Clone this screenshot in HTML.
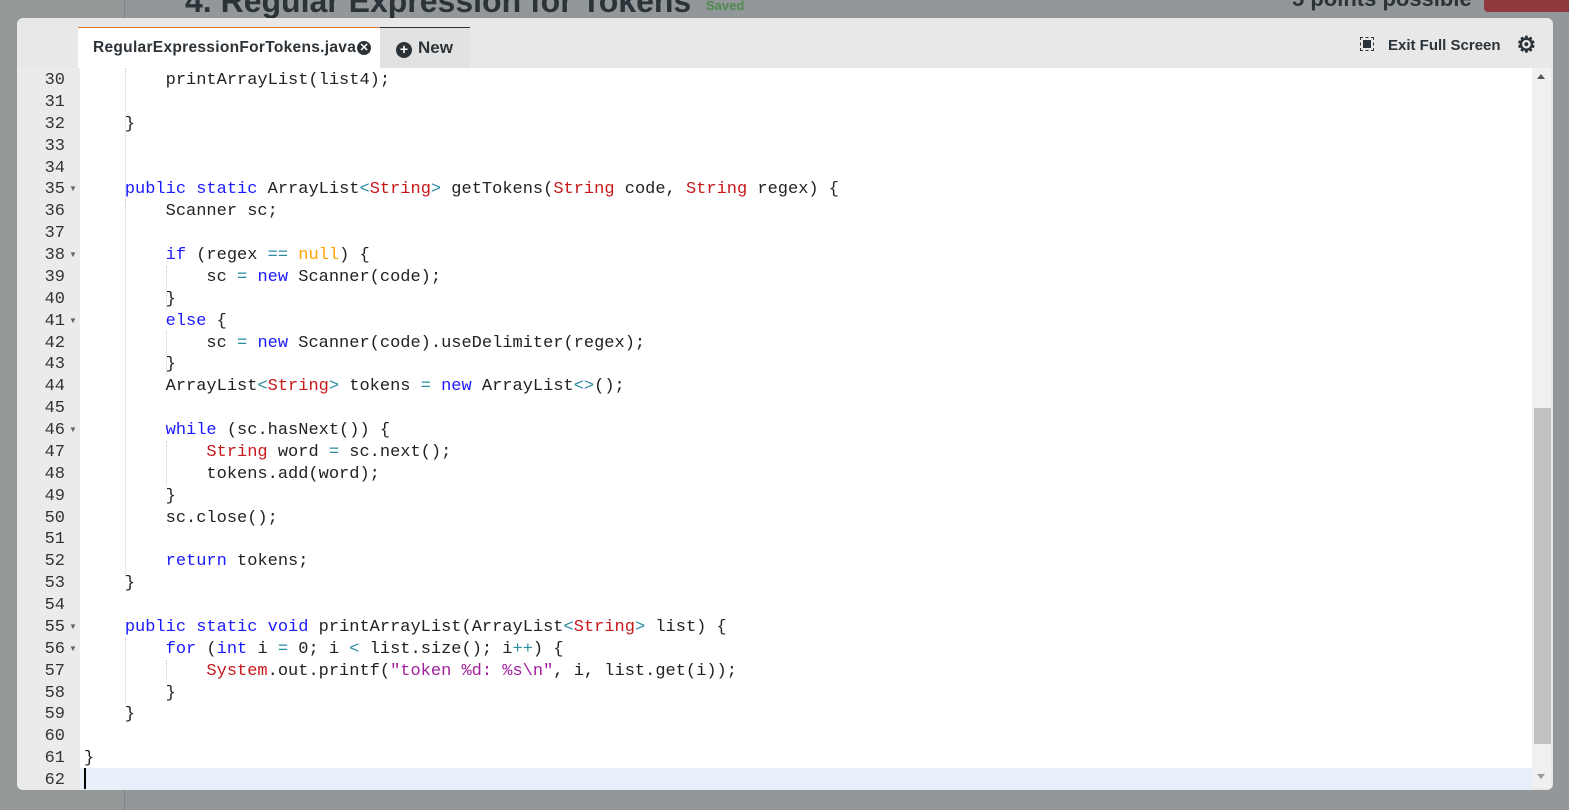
<!DOCTYPE html>
<html><head><meta charset="utf-8"><style>
*{margin:0;padding:0;box-sizing:border-box}
body{width:1569px;height:810px;overflow:hidden;background:#929799;font-family:"Liberation Sans",sans-serif;position:relative}
.side{position:absolute;left:0;top:0;width:125px;height:810px;background:#939899;border-right:1px solid #7f8485}
.title{position:absolute;left:185px;top:-17px;font-size:32px;font-weight:bold;color:#2c3338}
.saved{position:absolute;left:706px;top:-2px;font-size:13px;color:#4f8a4f;font-weight:bold}
.pts{position:absolute;left:1292px;top:-14px;font-size:22px;font-weight:bold;color:#2c3338}
.redbtn{position:absolute;left:1484px;top:-10px;width:90px;height:22px;background:#8e3a3d;border-radius:4px}
.panel{position:absolute;left:17px;top:18px;width:1536px;height:772px;background:#e8e8e8;border-radius:6px;overflow:hidden}
.tab{position:absolute;left:61px;top:9px;width:302px;height:41px;background:#fff;border-top:1px solid #e0772a;font-size:15.5px;font-weight:bold;color:#2c3338;padding:11px 0 0 15px;letter-spacing:0.3px}
.x{display:inline-block;width:14px;height:14px;border-radius:50%;background:#2c3338;color:#fff;font-size:11px;line-height:14px;text-align:center;vertical-align:1px;margin-left:1px;letter-spacing:0}
.new{position:absolute;left:363px;top:9px;width:90px;height:41px;background:#e2e2e2;border-top:1px solid #2c3338;font-size:17px;font-weight:bold;color:#2c3338;padding:10px 0 0 16px}
.plus{display:inline-block;width:16px;height:16px;border-radius:50%;background:#2c3338;color:#fff;font-size:14px;line-height:15px;text-align:center;font-weight:bold;vertical-align:-1px;margin-right:6px}
.exit{position:absolute;left:1343px;top:14px;font-size:15px;font-weight:bold;color:#2c3338}
.gut{position:absolute;left:0;top:50px;width:63px;height:722px;background:#ebebeb}
.code{position:absolute;left:63px;top:50px;width:1452px;height:722px;background:#fff}
.sb{position:absolute;left:1515px;top:50px;width:19px;height:720px;background:#f0f0f0}
.thumb{position:absolute;left:2px;top:340px;width:17px;height:336px;background:#c1c1c1}
.ln{position:absolute;left:0;width:48px;text-align:right;font-family:"Liberation Mono",monospace;font-size:17px;color:#333;height:21.875px;line-height:21.875px;padding-top:2px}
.fold{position:absolute;left:52px;font-size:8px;color:#666}
.l{position:absolute;left:4px;font-family:"Liberation Mono",monospace;font-size:17px;white-space:pre;color:#222;height:21.875px;line-height:21.875px;padding-top:2px}
.k{color:#1a1aff}.t{color:#c8171a}.o{color:#2a8ca0}.n{color:#ffa500}.s{color:#a0209c}
.g{position:absolute;border-left:1px dotted #ccc}
.cur{position:absolute;left:0;top:700px;width:1452px;height:22px;background:#e6effa}
</style></head><body>
<div class="side"></div>
<div class="title">4. Regular Expression for Tokens</div>
<div class="saved">Saved</div>
<div class="pts">5 points possible</div>
<div class="redbtn"></div>
<div class="panel">
<div class="tab">RegularExpressionForTokens.java<span class="x">✕</span></div>
<div class="new"><span class="plus">+</span>New</div>
<div class="exit"><span style="display:inline-block;width:14px;height:14px;border:1px dashed #2c3338;padding:2px;vertical-align:-1px;margin-right:14px"><span style="display:block;width:8px;height:8px;background:#2c3338"></span></span>Exit Full Screen<span style="margin-left:16px;font-size:22px;vertical-align:-2px">⚙</span></div>
<div class="gut" id="g"></div>
<div class="code" id="c"><div class="cur"></div>
<div class="g" style="left:45px;top:0;height:220px"></div>
<div class="g" style="left:86px;top:198px;height:44px"></div>
<div class="g" style="left:86px;top:263px;height:44px"></div>
<div class="g" style="left:86px;top:373px;height:44px"></div>
<div class="g" style="left:45px;top:132px;height:376px"></div>
<div class="g" style="left:45px;top:570px;height:66px"></div>
<div class="g" style="left:86px;top:592px;height:22px"></div>
<div style="position:absolute;left:4px;top:700px;width:2px;height:21px;background:#000"></div>
</div>
<div class="sb"><div style="position:absolute;left:5px;top:6px;border:4px solid transparent;border-bottom:5px solid #555;border-top:0"></div><div class="thumb"></div><div style="position:absolute;left:5px;top:706px;border:4px solid transparent;border-top:5px solid #999;border-bottom:0"></div></div>
</div>
<script>
var L=[
'        printArrayList(list4);','','    }','','',
'    <k>public</k> <k>static</k> ArrayList<o>&lt;</o><t>String</t><o>&gt;</o> getTokens(<t>String</t> code, <t>String</t> regex) {',
'        Scanner sc;','',
'        <k>if</k> (regex <o>==</o> <n>null</n>) {',
'            sc <o>=</o> <k>new</k> Scanner(code);',
'        }',
'        <k>else</k> {',
'            sc <o>=</o> <k>new</k> Scanner(code).useDelimiter(regex);',
'        }',
'        ArrayList<o>&lt;</o><t>String</t><o>&gt;</o> tokens <o>=</o> <k>new</k> ArrayList<o>&lt;&gt;</o>();','',
'        <k>while</k> (sc.hasNext()) {',
'            <t>String</t> word <o>=</o> sc.next();',
'            tokens.add(word);',
'        }',
'        sc.close();','',
'        <k>return</k> tokens;',
'    }','',
'    <k>public</k> <k>static</k> <k>void</k> printArrayList(ArrayList<o>&lt;</o><t>String</t><o>&gt;</o> list) {',
'        <k>for</k> (<k>int</k> i <o>=</o> 0; i <o>&lt;</o> list.size(); i<o>++</o>) {',
'            <t>System</t>.out.printf(<s>"token %d: %s\\n"</s>, i, list.get(i));',
'        }','    }','','}',''];
var folds=[35,38,41,46,55,56];
var g='',c='';
for(var i=0;i<L.length;i++){var y=(i*21.875).toFixed(2);var n=30+i;
g+='<div class="ln" style="top:'+y+'px">'+n+'</div>';
if(folds.indexOf(n)>=0)g+='<div class="fold" style="top:'+(i*21.875+7)+'px">▼</div>';
var s=L[i].replace(/<(k|t|o|n|s)>/g,'<span class="$1">').replace(/<\/(k|t|o|n|s)>/g,'</span>');
c+='<div class="l" style="top:'+y+'px">'+s+'</div>';}
document.getElementById('g').innerHTML=g;
document.getElementById('c').insertAdjacentHTML('beforeend',c);
</script>
</body></html>
